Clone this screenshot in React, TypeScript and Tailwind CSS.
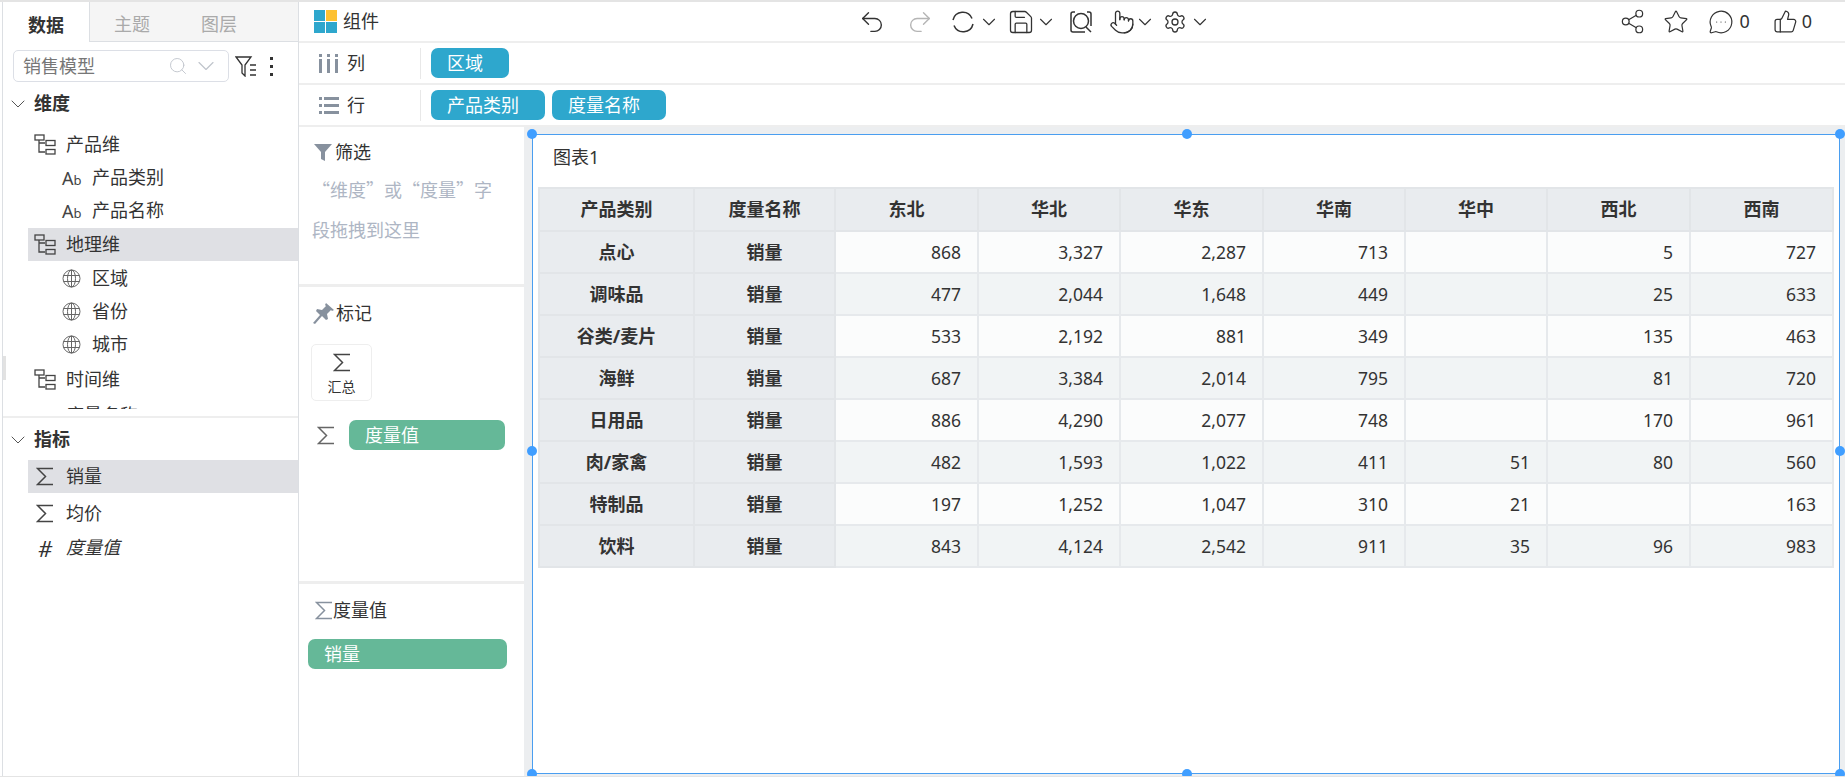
import React from 'react';
import { ChevronDown, Search, Undo2, Redo2, Save, Settings, Share2, Star, MessageCircleMore, ThumbsUp, Pointer } from 'lucide-react';

const font = { fontFamily: '"Noto Sans", "Noto Sans CJK SC", sans-serif' };

const TreeIcon = () => (
  <svg width="22" height="21" viewBox="0 0 22 21" fill="none" stroke="#444" strokeWidth="1.3" className="shrink-0">
    <rect x="1" y="1" width="9" height="5" />
    <path d="M5 6v12h6M5 9h6" />
    <rect x="12" y="6.500" width="9" height="5" />
    <rect x="12" y="15.500" width="9" height="4.500" />
  </svg>
);

const GlobeIcon = () => (
  <svg width="19" height="19" viewBox="0 0 19 19" fill="none" stroke="#666" strokeWidth="1" className="shrink-0">
    <circle cx="9.5" cy="9.5" r="8.5" />
    <ellipse cx="9.5" cy="9.5" rx="4" ry="8.5" />
    <path d="M9.5 1v17M1.5 6.5h16M1.5 12.5h16" />
  </svg>
);

const SigmaIcon = ({ color = '#444' }: { color?: string }) => (
  <svg width="18" height="19" viewBox="0 0 18 19" fill="none" stroke={color} strokeWidth="1.5" className="shrink-0">
    <path d="M17 1.5H1.5L9.5 9.5L1.5 17.5H17" />
  </svg>
);

const AbIcon = () => (
  <span className="w-[19px] shrink-0 text-[#444] leading-none whitespace-nowrap">
    <span className="text-[18px]">A</span>
    <span className="text-[13px]">b</span>
  </span>
);

const FieldRow = ({ icon, label }: { icon: React.ReactNode; label: string }) => (
  <div className="flex items-center h-[33px] pl-[59px] gap-[11px] text-[#333]">
    {icon}
    <span>{label}</span>
  </div>
);

const GroupRow = ({ label, active, italic, icon }: { label: string; active?: boolean; italic?: boolean; icon: React.ReactNode }) => (
  <div className={`flex items-center h-[33px] ml-[25px] pl-[6px] gap-[10px] text-[#333] ${active ? 'bg-[#dfe0e4]' : ''} ${italic ? 'italic' : ''}`}>
    <span className="w-[22px] flex justify-center shrink-0">{icon}</span>
    <span>{label}</span>
  </div>
);

const SectionTitle = ({ label }: { label: string }) => (
  <div className="flex items-center h-[33px] pl-[3px] gap-[4px] font-bold text-[#333]">
    <ChevronDown size={24} strokeWidth={1} className="text-[#555]" />
    <span>{label}</span>
  </div>
);

const Chip = ({ label, width, color = 'bg-[#2ea7cd]', pad = 'pl-[16px]' }: { label: string; width: string; color?: string; pad?: string }) => (
  <div className={`${width} ${color} ${pad} h-[30px] rounded-[7px] text-white flex items-center whitespace-nowrap`}>{label}</div>
);

const Handle = ({ className }: { className: string }) => (
  <span className={`absolute w-[10px] h-[10px] rounded-full bg-[#409eff] ${className}`} />
);

const columns = ['东北', '华北', '华东', '华南', '华中', '西北', '西南'];
const rows: [string, string[]][] = [
  ['点心', ['868', '3,327', '2,287', '713', '', '5', '727']],
  ['调味品', ['477', '2,044', '1,648', '449', '', '25', '633']],
  ['谷类/麦片', ['533', '2,192', '881', '349', '', '135', '463']],
  ['海鲜', ['687', '3,384', '2,014', '795', '', '81', '720']],
  ['日用品', ['886', '4,290', '2,077', '748', '', '170', '961']],
  ['肉/家禽', ['482', '1,593', '1,022', '411', '51', '80', '560']],
  ['特制品', ['197', '1,252', '1,047', '310', '21', '', '163']],
  ['饮料', ['843', '4,124', '2,542', '911', '35', '96', '983']],
];

const Sidebar = () => (
  <div className="w-[297px] shrink-0 flex flex-col border-l border-r border-[#dcdfe3] relative">
    <span className="absolute left-0 top-[354px] w-[3px] h-[24px] bg-[#e2e2e2]" />
    <div className="flex h-[40px] shrink-0 text-[#aaa]">
      <div className="w-[87px] flex items-center justify-center pt-[6px] font-bold text-[#333] border-r border-[#dcdfe3]">数据</div>
      <div className="flex-1 flex items-center bg-[#f5f5f5] border-b border-[#dcdfe3] pt-[6px] pl-[24px] gap-[51px]">
        <span>主题</span>
        <span>图层</span>
      </div>
    </div>
    <div className="flex items-center h-[40px] shrink-0 pl-[10px] pt-[8px]">
      <div className="w-[216px] h-[32px] border border-[#dcdfe6] rounded-[5px] flex items-center pl-[9px] pr-[12px] text-[#777]">
        <span className="flex-1">销售模型</span>
        <Search size={20} strokeWidth={1.1} className="text-[#c0c4cc] mr-[8px]" />
        <ChevronDown size={28} strokeWidth={1} className="text-[#c0c4cc] -mx-[4px]" />
      </div>
      <svg width="22" height="21" viewBox="0 0 22 21" fill="none" stroke="#333" strokeWidth="1.3" className="ml-[6px]">
        <path d="M1 1h15l-6 8v11l-3-3V9z" />
        <path d="M15 9h6M15 14h6M15 19h6" />
      </svg>
      <div className="ml-[13px] flex flex-col gap-[5px]">
        <span className="w-[3px] h-[3px] bg-[#333]" />
        <span className="w-[3px] h-[3px] bg-[#333]" />
        <span className="w-[3px] h-[3px] bg-[#333]" />
      </div>
    </div>
    <div className="h-[327px] shrink-0 overflow-hidden pt-[5px]">
      <SectionTitle label="维度" />
      <div className="h-[8px]" />
      <GroupRow label="产品维" icon={<TreeIcon />} />
      <FieldRow icon={<AbIcon />} label="产品类别" />
      <FieldRow icon={<AbIcon />} label="产品名称" />
      <div className="h-[1px]" />
      <GroupRow label="地理维" active icon={<TreeIcon />} />
      <div className="h-[1px]" />
      <FieldRow icon={<GlobeIcon />} label="区域" />
      <FieldRow icon={<GlobeIcon />} label="省份" />
      <FieldRow icon={<GlobeIcon />} label="城市" />
      <div className="h-[2px]" />
      <GroupRow label="时间维" icon={<TreeIcon />} />
      <div className="h-[3px]" />
      <GroupRow label="度量名称" icon={<AbIcon />} />
    </div>
    <div className="mt-[7px] border-t-2 border-[#eeeeee] pt-[5px]">
      <SectionTitle label="指标" />
      <div className="h-[4px]" />
      <GroupRow label="销量" active icon={<SigmaIcon />} />
      <div className="h-[4px]" />
      <GroupRow label="均价" icon={<SigmaIcon />} />
      <div className="h-[1px]" />
      <GroupRow label="度量值" italic icon={<span className="text-[22px] leading-none text-[#333]">#</span>} />
    </div>
  </div>
);

const Toolbar = () => (
  <div className="h-[41px] shrink-0 border-b-2 border-[#eeeeee] flex items-center">
    <div className="w-[559px] shrink-0 flex items-center pl-[15px] gap-[6px] text-[#333]">
      <div className="grid grid-cols-2 gap-[1px] w-[23px] h-[23px]">
        <span className="bg-[#2ea7cd]" />
        <span className="bg-[#fdc132]" />
        <span className="bg-[#2ea7cd]" />
        <span className="bg-[#2ea7cd]" />
      </div>
      <span>组件</span>
    </div>
    <div className="flex items-center text-[#333]">
      <Undo2 size={28} strokeWidth={1.2} />
      <Redo2 size={28} strokeWidth={1.2} className="text-[#b5b5b5] ml-[20px]" />
      <svg width="24" height="24" viewBox="0 0 24 24" fill="none" stroke="#333" strokeWidth="1.5" className="ml-[17px]">
        <path d="M2 10A10 10 0 0 1 21 8.500M22 14A10 10 0 0 1 3 15.500" />
      </svg>
      <ChevronDown size={22} strokeWidth={1.2} className="ml-[3px]" />
      <Save size={28} strokeWidth={1.1} className="ml-[7px]" />
      <ChevronDown size={22} strokeWidth={1.2} className="ml-0" />
      <svg width="22" height="22" viewBox="0 0 22 22" fill="none" stroke="#333" strokeWidth="1.5" className="ml-[13px]">
        <path d="M5 1H3a2 2 0 0 0-2 2v16a2 2 0 0 0 2 2h12M17 1h2a2 2 0 0 1 2 2v12" />
        <circle cx="11" cy="10" r="7.500" />
        <path d="M16 16l5 5" />
      </svg>
      <Pointer size={26} strokeWidth={1.2} className="ml-[17px]" />
      <ChevronDown size={22} strokeWidth={1.2} className="-ml-[1px]" />
      <Settings size={24} strokeWidth={1.3} className="ml-[7px]" />
      <ChevronDown size={22} strokeWidth={1.2} className="ml-[2px]" />
    </div>
    <div className="ml-auto flex items-center pr-[33px] text-[#333]">
      <Share2 size={27} strokeWidth={1.1} />
      <Star size={26} strokeWidth={1.1} className="ml-[17px]" />
      <MessageCircleMore size={26} strokeWidth={1.1} className="ml-[19px]" />
      <span className="ml-[5px]">0</span>
      <ThumbsUp size={25} strokeWidth={1.2} className="ml-[23px]" />
      <span className="ml-[4px]">0</span>
    </div>
  </div>
);

const ShelfRow = ({ label, icon, children }: { label: string; icon: React.ReactNode; children: React.ReactNode }) => (
  <div className="h-[42px] shrink-0 border-b-2 border-[#eeeeee] flex items-center">
    <div className="w-[122px] h-[31px] flex items-center pl-[20px] gap-[8px] text-[#333] border-r border-[#e8e8e8]">
      {icon}
      <span>{label}</span>
    </div>
    <div className="flex items-center gap-[7px] pl-[10px]">{children}</div>
  </div>
);

const MarksPanel = () => (
  <div className="w-[225px] shrink-0 flex flex-col text-[#333]">
    <div className="h-[160px] shrink-0 border-b-[3px] border-[#eeeeee] pt-[12px]">
      <div className="flex items-center pl-[14px] gap-[2px] h-[26px]">
        <svg width="20" height="20" viewBox="0 0 20 20" fill="#87919e">
          <path d="M1 2h18l-7 8v9l-4-2v-7z" />
        </svg>
        <span>筛选</span>
      </div>
      <div className="pl-[13px] pr-[20px] pt-[4px] text-[#aeb6c4] leading-[40px] font-['Noto_Sans_CJK_SC',sans-serif]">
        “维度”或“度量”字段拖拽到这里
      </div>
    </div>
    <div className="h-[297px] shrink-0 border-b-[3px] border-[#eeeeee] pt-[13px]">
      <div className="flex items-center pl-[14px] gap-[2px] h-[26px]">
        <svg width="21" height="21" viewBox="0 0 21 21" fill="#87919e">
          <path d="M13 0l8 7-2 1-1-1-4 4 1 5-2 1-4-4-7 8-2-1 7-8-4-4 1-2 5 1 4-4-1-1z" />
        </svg>
        <span>标记</span>
      </div>
      <div className="ml-[12px] mt-[18px] w-[61px] h-[57px] border border-[#eeeeee] rounded-[5px] flex flex-col items-center pt-[8px]">
        <SigmaIcon />
        <span className="text-[14px] leading-none pt-[8px]">汇总</span>
      </div>
      <div className="flex items-center pl-[18px] mt-[19px] gap-[14px]">
        <SigmaIcon color="#666" />
        <Chip label="度量值" width="w-[156px]" color="bg-[#65b898]" />
      </div>
    </div>
    <div className="flex-1 pt-[13px]">
      <div className="flex items-center pl-[16px] h-[26px]">
        <SigmaIcon color="#87919e" />
        <span>度量值</span>
      </div>
      <div className="pl-[9px] mt-[16px]">
        <Chip label="销量" width="w-[199px]" color="bg-[#65b898]" />
      </div>
    </div>
  </div>
);

const PivotTable = () => (
  <table className="table-fixed border-collapse w-[1294px] text-[#333]">
    <colgroup>
      <col className="w-[155px]" />
      <col className="w-[141px]" />
      <col className="w-[143px]" />
      <col className="w-[142px]" />
      <col className="w-[143px]" />
      <col className="w-[142px]" />
      <col className="w-[142px]" />
      <col className="w-[143px]" />
      <col className="w-[143px]" />
    </colgroup>
    <thead>
      <tr className="h-[43px] bg-[#e9ecef] font-bold">
        <th className="border-2 border-[#e2e5e8] font-bold">产品类别</th>
        <th className="border-2 border-[#e2e5e8] font-bold">度量名称</th>
        {columns.map((c) => (
          <th key={c} className="border-2 border-[#e2e5e8] font-bold">{c}</th>
        ))}
      </tr>
    </thead>
    <tbody>
      {rows.map(([name, values], i) => (
        <tr key={name} className={`h-[42px] ${i % 2 === 0 ? 'bg-[#fbfcfc]' : 'bg-[#f1f4f5]'}`}>
          <td className="border-2 border-[#e2e5e8] bg-[#e9ecef] text-center font-bold">{name}</td>
          <td className="border-2 border-[#e2e5e8] bg-[#e9ecef] text-center font-bold">销量</td>
          {values.map((v, j) => (
            <td key={j} className="border-2 border-[#e6e9ec] text-right pr-[16px] text-[17.5px]">{v}</td>
          ))}
        </tr>
      ))}
    </tbody>
  </table>
);

export default function App() {
  return (
    <div style={font} className="w-screen h-screen overflow-hidden bg-white text-[18px] leading-normal border-t-2 border-b border-[#e4e4e4] pl-[2px] flex">
      <Sidebar />
      <div className="flex-1 min-w-0 flex flex-col">
        <Toolbar />
        <ShelfRow
          label="列"
          icon={
            <svg width="20" height="20" viewBox="0 0 20 20" fill="#87919e">
              <path d="M0 6h3v14H0zM8 6h3v14H8zM16 6h3v14h-3zM0 1h3v3H0zM8 1h3v3H8zM16 1h3v3h-3z" />
            </svg>
          }
        >
          <Chip label="区域" width="w-[78px]" />
        </ShelfRow>
        <ShelfRow
          label="行"
          icon={
            <svg width="20" height="20" viewBox="0 0 20 20" fill="#87919e">
              <path d="M0 2h3v3H0zM5 2h15v3H5zM0 9h3v3H0zM5 9h15v3H5zM0 16h3v3H0zM5 16h15v3H5z" />
            </svg>
          }
        >
          <Chip label="产品类别" width="w-[114px]" />
          <Chip label="度量名称" width="w-[114px]" />
        </ShelfRow>
        <div className="flex-1 min-h-0 flex">
          <MarksPanel />
          <div className="flex-1 min-w-0 bg-[#eceef0] pt-[7px] pl-[8px] pr-[5px] pb-[2px]">
            <div className="relative h-full bg-white border border-[#4a9ef0] pl-[5px] pt-[8px]">
              <Handle className="left-[-6px] top-[-6px]" />
              <Handle className="left-[649px] top-[-6px]" />
              <Handle className="right-[-6px] top-[-6px]" />
              <Handle className="left-[-6px] top-[311px]" />
              <Handle className="right-[-6px] top-[311px]" />
              <Handle className="left-[-6px] bottom-[-6px]" />
              <Handle className="left-[649px] bottom-[-6px]" />
              <Handle className="right-[-6px] bottom-[-6px]" />
              <div className="pl-[15px] h-[44px] text-[#333] leading-[28px]">图表1</div>
              <PivotTable />
            </div>
          </div>
        </div>
      </div>
    </div>
  );
}
